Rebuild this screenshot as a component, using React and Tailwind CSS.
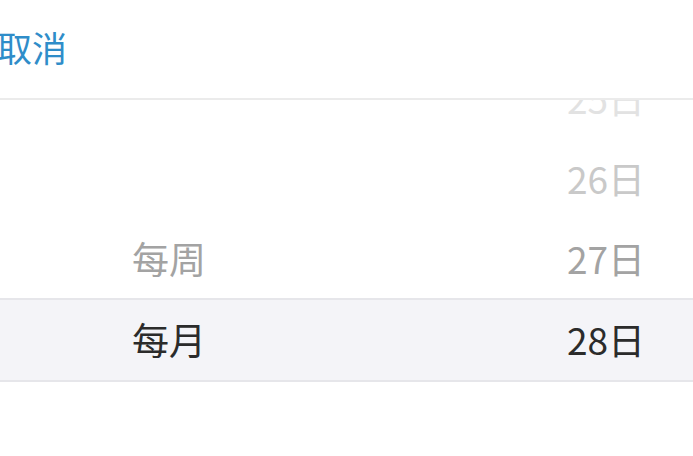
import React from "react";

const rows = [
  { left: "", right: "25日", leftColor: "", rightColor: "text-[#e2e2e2]" },
  { left: "", right: "26日", leftColor: "", rightColor: "text-[#c9c9c9]" },
  { left: "每周", right: "27日", leftColor: "text-[#a3a3a3]", rightColor: "text-[#a3a3a3]" },
  { left: "每月", right: "28日", leftColor: "text-[#2b2b2b]", rightColor: "text-[#2b2b2b]", selected: true },
  { left: "", right: "", leftColor: "", rightColor: "" },
];

export default function App() {
  return (
    <div
      className="w-[693px] h-[456px] bg-white overflow-hidden flex flex-col"
      style={{ fontFamily: '"Noto Sans CJK SC", "Noto Sans", sans-serif' }}
    >
      {/* header */}
      <div className="h-[100px] shrink-0 flex items-center border-b-2 border-[#ebebeb]">
        <span className="-ml-[3px] text-[35px] leading-none text-[#2f8dc9] pb-[6px]">取消</span>
      </div>

      {/* picker */}
      <div className="flex-1 overflow-hidden">
        <div className="-mt-[42px]">
          {rows.map((r, i) => (
            <div
              key={i}
              className={`flex items-center justify-between ${
                r.selected
                  ? "h-[84px] bg-[#f4f4f8] border-y-2 border-[#e6e6ea] pb-[2px]"
                  : "h-[80px]"
              }`}
            >
              <span className={`pl-[132px] text-[37px] leading-none ${r.leftColor}`}>{r.left}</span>
              <span className={`pr-[48px] text-[37px] leading-none ${r.rightColor}`}>{r.right}</span>
            </div>
          ))}
        </div>
      </div>
    </div>
  );
}
